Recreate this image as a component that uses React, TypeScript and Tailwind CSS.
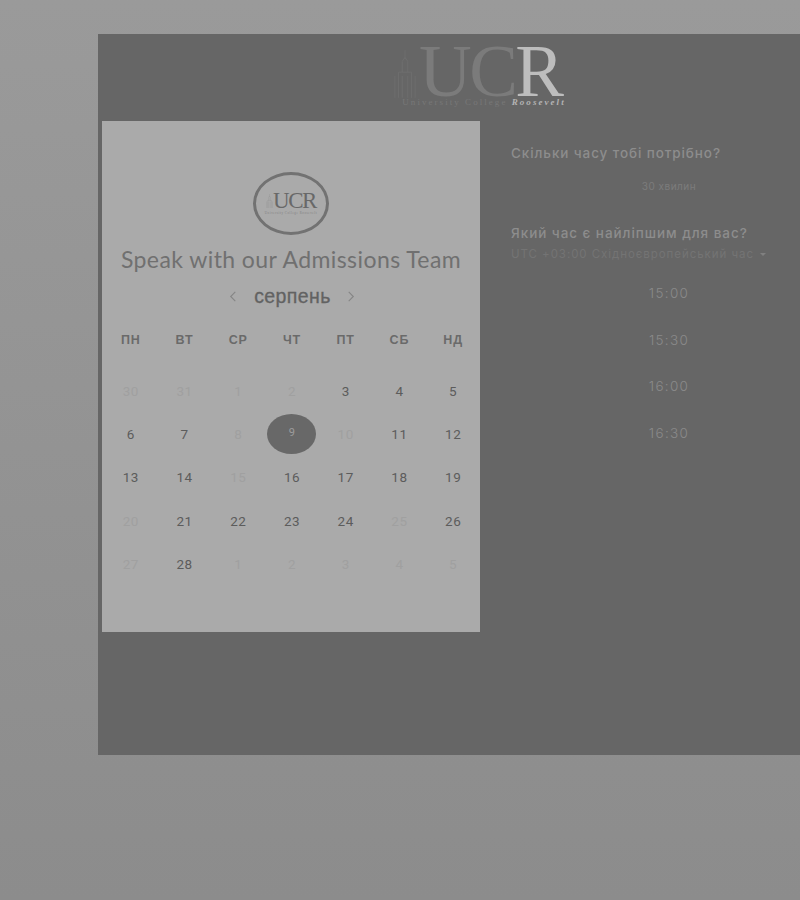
const weekdays = ["ПН", "ВТ", "СР", "ЧТ", "ПТ", "СБ", "НД"];

// muted = greyed out day in the calendar
const days = [
  { label: "30", muted: true },
  { label: "31", muted: true },
  { label: "1", muted: true },
  { label: "2", muted: true },
  { label: "3" },
  { label: "4" },
  { label: "5" },
  { label: "6" },
  { label: "7" },
  { label: "8", muted: true },
  { label: "9", selected: true },
  { label: "10", muted: true },
  { label: "11" },
  { label: "12" },
  { label: "13" },
  { label: "14" },
  { label: "15", muted: true },
  { label: "16" },
  { label: "17" },
  { label: "18" },
  { label: "19" },
  { label: "20", muted: true },
  { label: "21" },
  { label: "22" },
  { label: "23" },
  { label: "24" },
  { label: "25", muted: true },
  { label: "26" },
  { label: "27", muted: true },
  { label: "28" },
  { label: "1", muted: true },
  { label: "2", muted: true },
  { label: "3", muted: true },
  { label: "4", muted: true },
  { label: "5", muted: true },
];

const times = ["15:00", "15:30", "16:00", "16:30"];

const Tower = ({ className }: { className: string }) => (
  <svg viewBox="0 0 24 52" fill="none" stroke="currentColor" strokeWidth="0.7" className={className}>
    <path d="M12 0V10M9 12L12 8L15 12V24M9 12V24M5 24H19M5 24V52M19 24V52M1 28V52M23 28V52M9 28V52M15 28V52" />
  </svg>
);

const Logo = () => (
  <div className="flex flex-col items-center pt-[7px] pl-[60px] h-[87px]">
    <div className="flex items-start h-[57px]">
      <Tower className="w-[22px] h-[48px] mt-[9px] mr-[3px] text-[#727272]" />
      <div className="font-['Liberation_Serif',serif] text-[73px] leading-[62px] tracking-[-2.5px] text-[#7b7b7b]">
        UC<span className="text-[#bdbdbd] tracking-normal">R</span>
      </div>
    </div>
    <div className="font-['Liberation_Serif',serif] text-[9px] leading-[11px] mt-[-1px] ml-[10px] tracking-[2.05px] text-[#787878] whitespace-nowrap">
      University College{" "}
      <span className="text-[#b4b4b4] italic font-bold">Roosevelt</span>
    </div>
  </div>
);

const Calendar = () => (
  <div className="w-[378px] h-[511px] ml-[4px] bg-[#aaaaaa] flex flex-col items-center pt-[51px]">
    <div className="w-[76px] h-[63px] rounded-[50%] border-[3px] border-[#727272] flex flex-col items-center justify-center">
      <div className="flex items-end">
        <Tower className="w-[7px] h-[14px] mb-[2px] text-[#808080]" />
        <span className="font-['Liberation_Serif',serif] text-[23px] leading-[18px] tracking-[-1.5px] text-[#686868]">UCR</span>
      </div>
      <span className="font-['Liberation_Serif',serif] text-[3px] leading-[4px] mt-[1px] tracking-[0.6px] text-[#808080] whitespace-nowrap">
        University College Roosevelt
      </span>
    </div>

    <h1 className="font-['Lato',sans-serif] text-[23px] leading-[30px] mt-[9px] tracking-[0.42px] text-[#707070] whitespace-nowrap">
      Speak with our Admissions Team
    </h1>

    <div className="flex items-center mt-[9px] ml-[2px]">
      <svg viewBox="0 0 8 12" fill="none" stroke="#858585" strokeWidth="1.2" className="w-[8px] h-[11px]">
        <path d="M6.5 1L1.5 6L6.5 11" />
      </svg>
      <span className="font-['Liberation_Sans',sans-serif] font-medium text-[19.5px] leading-[26px] ml-[17px] mr-[16px] tracking-[0.4px] text-[#626262] [-webkit-text-stroke:0.3px_#626262]">
        серпень
      </span>
      <svg viewBox="0 0 8 12" fill="none" stroke="#858585" strokeWidth="1.2" className="w-[8px] h-[11px]">
        <path d="M1.5 1L6.5 6L1.5 11" />
      </svg>
    </div>

    <div className="grid grid-cols-7 w-[376px] ml-[2px] mt-[23px]">
      {weekdays.map((day) => (
        <div
          key={day}
          className="h-[16px] text-center font-['Liberation_Sans',sans-serif] font-bold text-[12.5px] leading-[16px] tracking-[0.9px] text-[#6a6a6a]"
        >
          {day}
        </div>
      ))}
    </div>

    <div className="grid grid-cols-7 grid-rows-[repeat(5,43.2px)] w-[376px] ml-[2px] mt-[21.5px] font-['Roboto',sans-serif] text-[13.5px] tracking-[0.5px]">
      {days.map((day, i) => (
        <div key={i} className="flex items-center justify-center">
          {day.selected ? (
            <span className="w-[49px] h-[40px] rounded-[50%] bg-[#686868] flex items-center justify-center text-[11px] pb-[3px] text-[#9c9c9c]">
              {day.label}
            </span>
          ) : (
            <span className={day.muted ? "text-[#a0a0a0]" : "text-[#5c5c5c]"}>{day.label}</span>
          )}
        </div>
      ))}
    </div>
  </div>
);

const SidePanel = () => (
  <div className="flex-1 pl-[31px] font-['Inter',sans-serif] whitespace-nowrap">
    <h2 className="mt-[23px] text-[13.5px] leading-[18px] font-medium tracking-[0.9px] text-[#8d8d8d]">
      Скільки часу тобі потрібно?
    </h2>
    <div className="w-[316px] mt-[16px] text-center text-[10px] leading-[16px] tracking-[0.5px] text-[#7c7c7c]">
      30 хвилин
    </div>
    <h2 className="mt-[30px] text-[13.5px] leading-[18px] font-medium tracking-[0.95px] text-[#8d8d8d]">
      Який час є найліпшим для вас?
    </h2>
    <div className="flex items-center gap-[6px] mt-[4px] text-[11.5px] leading-[16px] tracking-[0.95px] text-[#747474]">
      <span>UTC +03:00 Східноєвропейський час</span>
      <span className="w-0 h-0 border-x-[3px] border-x-transparent border-t-[3px] border-t-[#808080]" />
    </div>
    <div className="flex flex-col w-[316px] mt-[8px]">
      {times.map((time) => (
        <div key={time} className="h-[46.5px] flex items-center justify-center font-light text-[13.5px] tracking-[1.3px] text-[#8a8a8a]">
          {time}
        </div>
      ))}
    </div>
  </div>
);

export default function App() {
  return (
    <div className="h-[900px] overflow-hidden pt-[34px] pl-[98px] bg-gradient-to-b from-[#9a9a9a] to-[#8c8c8c]">
      <div className="w-[702px] h-[721px] bg-[#666666]">
        <Logo />
        <div className="flex">
          <Calendar />
          <SidePanel />
        </div>
      </div>
    </div>
  );
}
